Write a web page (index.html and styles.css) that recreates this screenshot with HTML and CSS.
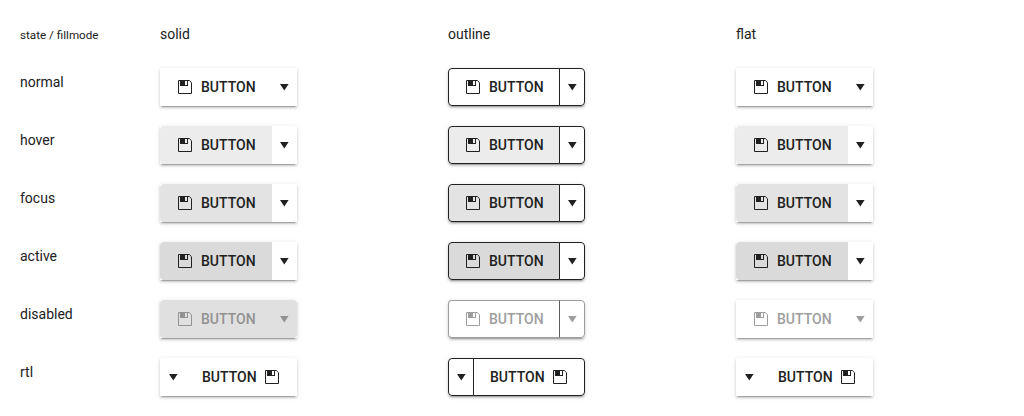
FILE: index.html
```
<!DOCTYPE html>
<html lang="en">
<head>
<meta charset="utf-8">
<title>Split button states</title>
<link rel="stylesheet" href="styles.css">
</head>
<body>
<svg class="sprite" aria-hidden="true">
  <symbol id="save" viewBox="0 0 16 16">
    <path fill="none" stroke="currentColor" d="M1.500 1.500H12.300L14.500 3.700V14.500H1.500Z"/>
    <path fill="currentColor" fill-rule="evenodd" d="M3 1H11V7H3ZM8 2V6H10V2Z"/>
  </symbol>
  <symbol id="caret" viewBox="0 0 16 16">
    <path fill="currentColor" d="M4 5H12.600L8.300 11.400Z"/>
  </symbol>
</svg>
<main class="states" id="states"></main>
<script src="main.js"></script>
</body>
</html>
```
FILE: styles.css
```
*, *::before, *::after { box-sizing: border-box; }
body {
  margin: 0;
  background: #fff;
  color: #212121;
  font: 14px/28px Roboto, sans-serif;
}
.sprite { position: absolute; width: 0; height: 0; }
.states {
  display: grid;
  grid-template-columns: 140px repeat(3, 1fr);
  grid-template-rows: 28px;
  row-gap: 20px;
  grid-auto-rows: 38px;
  padding: 20px 0 20px 20px;
}
.corner { font-size: smaller; line-height: 30px; }
.split {
  display: flex;
  justify-self: start;
  align-self: start;
  background: #fff;
  box-shadow: 0 3px 1px -2px rgba(0, 0, 0, .2), 0 2px 2px rgba(0, 0, 0, .14), 0 1px 5px rgba(0, 0, 0, .12);
}
.btn {
  display: flex;
  align-items: center;
  gap: 8px;
  height: 38px;
  margin: 0;
  padding: 0 16px;
  border: 1px solid transparent;
  background: transparent;
  color: #212121;
  font: 500 14px/20px Roboto, sans-serif;
  text-transform: uppercase;
}
.btn svg { display: block; width: 16px; height: 16px; flex: none; }
.main { position: relative; padding-inline-end: 15px; border-start-start-radius: 4px; border-end-start-radius: 4px; }
.rtl .main { gap: 7px; padding: 0 16px; }
.arrow { padding: 0 4px; margin-inline-start: -1px; border-start-end-radius: 4px; border-end-end-radius: 4px; }
.outline { border-radius: 4px; }
.outline .btn { border-color: #212121; }
.hover .main { background: #ececec; }
.focus .main { background: #e3e3e3; }
.active .main { background: #dadada; }
.disabled .btn { color: #9e9e9e; }
.disabled.solid .btn { background: #e0e0e0; color: #929292; }
.disabled.outline .btn { border-color: #9e9e9e; }
.disabled.outline .main { border-inline-end-color: #5f5f5f; }
```
FILE: main.js
```
const fills = ["solid", "outline", "flat"];
const states = ["normal", "hover", "focus", "active", "disabled", "rtl"];
const icon = name => `<svg aria-hidden="true"><use href="#${name}"/></svg>`;

const head = `<div class="corner">state / fillmode</div>` +
  fills.map(fill => `<div>${fill}</div>`).join("");

const rows = states.map(state => {
  const off = state === "disabled" ? "disabled" : "";
  const dir = state === "rtl" ? "rtl" : "ltr";
  return `<div>${state}</div>` + fills.map(fill => `
    <div class="split ${fill} ${state}" dir="${dir}">
      <button type="button" class="btn main" ${off}>${icon("save")}<span>Button</span></button>
      <button type="button" class="btn arrow" aria-label="More options" ${off}>${icon("caret")}</button>
    </div>`).join("");
}).join("");

document.getElementById("states").innerHTML = head + rows;
```
